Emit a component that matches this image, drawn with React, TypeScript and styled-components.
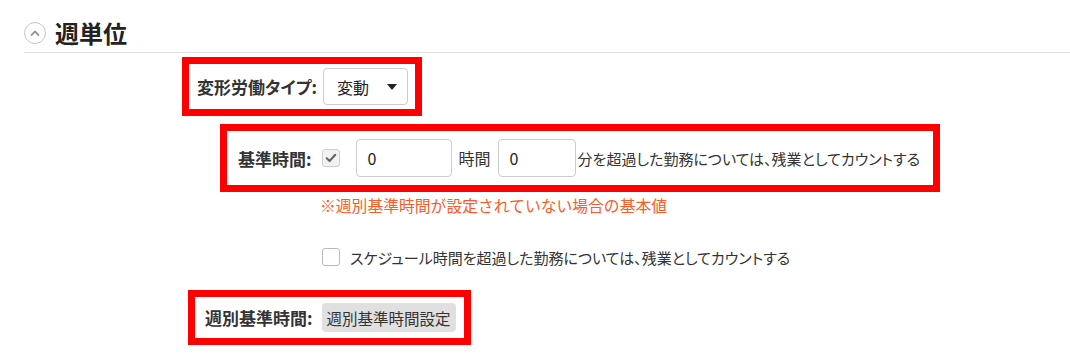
import React from 'react';
import styled, { createGlobalStyle } from 'styled-components';

const Global = createGlobalStyle`
  html, body { margin: 0; padding: 0; background: #fff; }
  body { font-family: "Noto Sans CJK JP", "Noto Sans", sans-serif; color: #333; }
`;

const Page = styled.div`
  width: 1070px;
  height: 362px;
  overflow: hidden;
  display: flex;
  flex-direction: column;
  align-items: flex-start;
`;

const Header = styled.div`
  align-self: stretch;
  margin-left: 24px;
  height: 53px;
  box-sizing: border-box;
  padding-top: 21px;
  display: flex;
  align-items: flex-start;
  gap: 9px;
  border-bottom: 1px solid #ddd;
`;

const Toggle = styled.span`
  width: 22px;
  height: 22px;
  box-sizing: border-box;
  border: 1.5px solid #c8c8c8;
  border-radius: 50%;
  display: flex;
  align-items: center;
  justify-content: center;
  margin-top: 1px;
`;

const Title = styled.h2`
  margin: 0;
  font-size: 24px;
  line-height: 24px;
  font-weight: 700;
  color: #222;
`;

const Highlight = styled.div<{ $left: number; $top: number; $pad: string }>`
  margin-left: ${p => p.$left}px;
  margin-top: ${p => p.$top}px;
  border: 7px solid #ff0000;
  padding: ${p => p.$pad};
  display: flex;
  align-items: center;
`;

const Label = styled.span<{ $gap: number }>`
  font-size: 17px;
  font-weight: 700;
  font-feature-settings: "palt";
  color: #333;
  margin-right: ${p => p.$gap}px;
  white-space: nowrap;
`;

const Select = styled.div`
  width: 85px;
  height: 37px;
  box-sizing: border-box;
  border: 1px solid #ccc;
  border-radius: 4px;
  display: flex;
  align-items: center;
  justify-content: space-between;
  padding: 0 10px 0 13px;
  font-size: 16px;
  color: #222;
`;

const Caret = styled.span`
  width: 0;
  height: 0;
  border-left: 5px solid transparent;
  border-right: 5px solid transparent;
  border-top: 6px solid #222;
`;

const Check = styled.span<{ $checked?: boolean; $left: number }>`
  width: 18px;
  height: 18px;
  box-sizing: border-box;
  border: 1px solid ${p => (p.$checked ? '#d0d0d0' : '#bbb')};
  border-radius: 3px;
  background: ${p => (p.$checked ? '#f2f2f2' : '#fff')};
  display: flex;
  align-items: center;
  justify-content: center;
  flex: none;
  margin-left: ${p => p.$left}px;
`;

const Input = styled.div<{ $w: number; $left: number }>`
  width: ${p => p.$w}px;
  height: 38px;
  box-sizing: border-box;
  border: 1px solid #ccc;
  border-radius: 4px;
  margin-left: ${p => p.$left}px;
  padding-left: 11px;
  display: flex;
  align-items: center;
  font-size: 16px;
  color: #222;
`;

const Text = styled.span<{ $left: number; $size: number }>`
  font-size: ${p => p.$size}px;
  font-feature-settings: "palt";
  color: #333;
  margin-left: ${p => p.$left}px;
  white-space: nowrap;
`;

const Note = styled.div`
  margin-left: 320px;
  margin-top: 4px;
  font-size: 15.8px;
  line-height: 20px;
  color: #ff5a26;
`;

const CheckRow = styled.div`
  margin-top: 31px;
  height: 20px;
  display: flex;
  align-items: center;
`;

const Button = styled.div`
  background: #e0e0e0;
  border-radius: 4px;
  height: 29px;
  padding: 0 5px;
  display: flex;
  align-items: center;
  font-size: 15.5px;
  color: #333;
`;

export default function App() {
  return (
    <>
      <Global />
      <Page>
        <Header>
          <Toggle>
            <svg width="12" height="12" viewBox="0 0 12 12">
              <path d="M2.5 8 L6 4.5 L9.5 8" fill="none" stroke="#999" strokeWidth="1.8" strokeLinecap="round" strokeLinejoin="round" />
            </svg>
          </Toggle>
          <Title>週単位</Title>
        </Header>

        <Highlight $left={182} $top={4} $pad="4px 7px 4px 8px">
          <Label $gap={6}>変形労働タイプ:</Label>
          <Select>
            <span>変動</span>
            <Caret />
          </Select>
        </Highlight>

        <Highlight $left={220} $top={8} $pad="8px 13px 8px 11px">
          <Label $gap={10}>基準時間:</Label>
          <Check $checked $left={0}>
            <svg width="12" height="12" viewBox="0 0 12 12">
              <path d="M1.8 6.3 L4.6 9 L10.2 2.8" fill="none" stroke="#666" strokeWidth="2.2" strokeLinecap="round" strokeLinejoin="round" />
            </svg>
          </Check>
          <Input $w={96} $left={16}>0</Input>
          <Text $size={16} $left={7}>時間</Text>
          <Input $w={78} $left={7}>0</Input>
          <Text $size={15} $left={2}>分を超過した勤務については、残業としてカウントする</Text>
        </Highlight>

        <Note>※週別基準時間が設定されていない場合の基本値</Note>

        <CheckRow>
          <Check $left={322} />
          <Text $size={15} $left={10}>スケジュール時間を超過した勤務については、残業としてカウントする</Text>
        </CheckRow>

        <Highlight $left={188} $top={23} $pad="6px 8px 6px 10px">
          <Label $gap={9}>週別基準時間:</Label>
          <Button>週別基準時間設定</Button>
        </Highlight>
      </Page>
    </>
  );
}
